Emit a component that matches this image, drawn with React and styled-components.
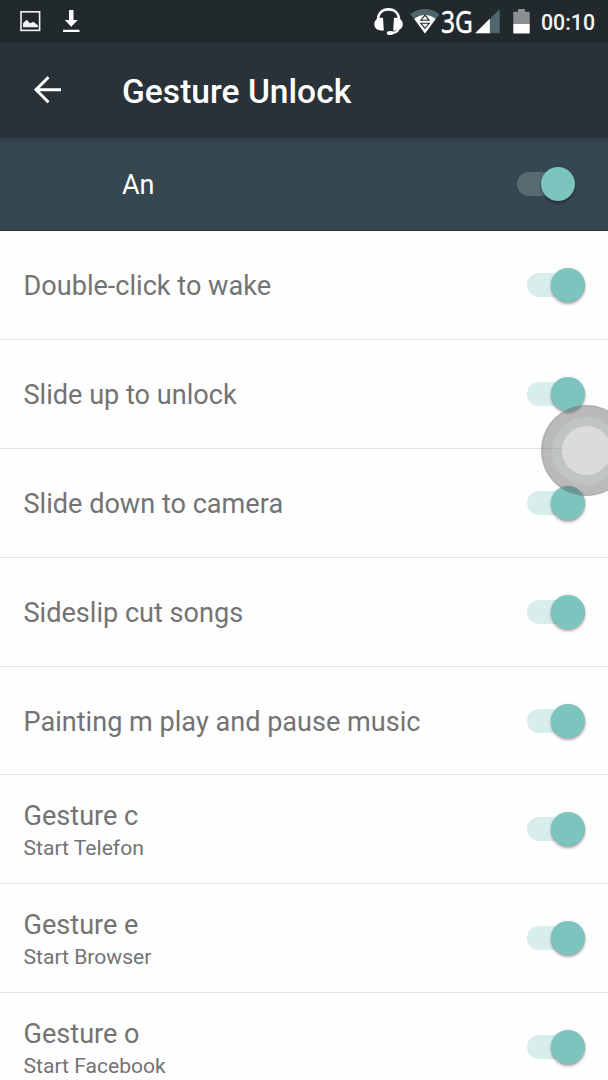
import React, { useState } from "react";
import styled, { createGlobalStyle } from "styled-components";

const GlobalStyle = createGlobalStyle`
  body {
    margin: 0;
    background: #fefefe;
    font-family: Roboto, "Noto Sans", sans-serif;
    overflow: hidden;
  }
`;

const Screen = styled.div`
  position: relative;
  width: 608px;
  height: 1080px;
  overflow: hidden;
  background: #fefefe;
`;

const StatusBar = styled.div`
  display: flex;
  align-items: center;
  justify-content: space-between;
  box-sizing: border-box;
  height: 42px;
  padding: 0 13px 0 19px;
  background: #22292d;
`;

const StatusGroup = styled.div`
  display: flex;
  align-items: center;
  height: 42px;
`;

const Icon = styled.svg`
  display: block;
  flex: none;
  margin-left: ${props => props.$gap || 0}px;
`;

const Network = styled.div`
  width: 32px;
  height: 42px;
  margin-left: 1px;
  color: white;
  font-family: "Noto Sans", sans-serif;
  font-size: 31px;
  line-height: 43px;
  white-space: nowrap;
  -webkit-text-stroke: 0.4px white;
`;

const Narrow = styled.span`
  display: inline-block;
  transform: scaleX(0.79);
  transform-origin: left;
`;

const Clock = styled.div`
  width: 54px;
  margin-left: 11px;
  padding-top: 3px;
  color: #f4f5f5;
  font-size: 21.3px;
  font-weight: 500;
  line-height: 42px;
  white-space: nowrap;
`;

const Header = styled.header`
  display: flex;
  align-items: center;
  height: 95px;
  padding-left: 34px;
  background: #283238;
`;

const Title = styled.h1`
  margin: 5px 0 0 60px;
  color: white;
  font-size: 33.6px;
  font-weight: 500;
  line-height: 40px;
  white-space: nowrap;
`;

const MasterRow = styled.div`
  display: flex;
  align-items: center;
  justify-content: space-between;
  box-sizing: border-box;
  height: 94px;
  padding: 1px 33px 0 122px;
  border-bottom: 1px solid #2b373d;
  background: linear-gradient(#2d3b42, #37474f 6px);
`;

const MasterLabel = styled.div`
  margin-top: 1px;
  color: white;
  font-size: 27px;
  line-height: 32px;
`;

const Row = styled.div`
  display: flex;
  align-items: center;
  justify-content: space-between;
  box-sizing: border-box;
  height: 108.9px;
  padding: 0 23px 0 23.5px;
  border-bottom: 1px solid #e2e2e2;
`;

const RowText = styled.div`
  padding-top: ${props => props.$double ? 6 : 3}px;
`;

const RowTitle = styled.div`
  color: #737373;
  font-size: 27.1px;
  line-height: 32px;
  white-space: nowrap;
`;

const RowSummary = styled.div`
  color: #737373;
  font-size: 21.1px;
  line-height: 32px;
  white-space: nowrap;
`;

const Track = styled.button`
  display: flex;
  align-items: center;
  justify-content: ${props => props.$on ? "flex-end" : "flex-start"};
  width: 58px;
  height: 24px;
  padding: 0;
  border: 0;
  border-radius: 12px;
  background: ${props => props.$dark ? "#566a6f" : "#d8eeeb"};
`;

const Thumb = styled.span`
  width: 34px;
  height: 34px;
  flex: none;
  border-radius: 50%;
  background: ${props => props.$on ? "#7cc5be" : "#f1f1f1"};
  box-shadow: 0 2px 3px rgba(0, 0, 0, 0.35), 0 0 2px rgba(0, 0, 0, 0.12);
`;

// floats above the list, half docked to the right edge
const AssistBall = styled.div`
  position: absolute;
  top: 405px;
  left: 540.5px;
  display: grid;
  place-items: center;
  width: 91px;
  height: 91px;
  border-radius: 50%;
  background: rgba(77, 77, 77, 0.38);
  box-shadow: inset 0 0 0 2px rgba(150, 150, 150, 0.2);
`;

const AssistRing = styled.div`
  display: grid;
  place-items: center;
  width: 68px;
  height: 68px;
  border-radius: 50%;
  background: rgba(205, 220, 222, 0.3);
`;

const AssistCore = styled.div`
  width: 49px;
  height: 49px;
  border-radius: 50%;
  background: rgba(235, 235, 232, 0.6);
`;

const gestures = [
  { title: "Double-click to wake" },
  { title: "Slide up to unlock" },
  { title: "Slide down to camera" },
  { title: "Sideslip cut songs" },
  { title: "Painting m play and pause music" },
  { title: "Gesture c", summary: "Start Telefon" },
  { title: "Gesture e", summary: "Start Browser" },
  { title: "Gesture o", summary: "Start Facebook" },
];

function Switch({ dark, label }) {
  const [on, setOn] = useState(true);
  return (
    <Track
      type="button"
      role="switch"
      aria-checked={on}
      aria-label={label}
      $on={on}
      $dark={dark}
      onClick={() => setOn(!on)}
    >
      <Thumb $on={on} />
    </Track>
  );
}

function StatusIcons() {
  return (
    <StatusBar>
      <StatusGroup>
        <Icon width="22" height="22" viewBox="0 0 22 22">
          <rect x="2" y="1.8" width="18.6" height="18.6" fill="none" stroke="#f2f2f2" strokeWidth="1.6" />
          <path d="M4 17.3V13.2L7.6 9.7L11 13.2L14.5 11.8L19 15.4V17.3Z" fill="#f2f2f2" />
        </Icon>
        <Icon $gap={21} width="18" height="24" viewBox="0 0 18 24">
          <path d="M7 1H11.5V11H15.8L9.2 17.7L2.7 11H7ZM1 20.7H17.5V23H1Z" fill="#fff" />
        </Icon>
      </StatusGroup>
      <StatusGroup>
        <Icon width="30" height="30" viewBox="0 0 30 30">
          <path d="M5 14C5 7 9.5 3.4 15.5 3.4S26 7 26 14" fill="none" stroke="#fff" strokeWidth="2.6" />
          <path d="M10 11.8L10.8 24.4C4.5 25 1.3 22 1.3 18.2C1.3 14.5 4 11.8 10 11.8ZM21 11.8L20.2 24.4C26.5 25 29.8 22 29.8 18.2C29.8 14.5 27 11.8 21 11.8Z" fill="#fff" />
          <path d="M25.5 22.5C25 26 22 27 18 27" fill="none" stroke="#fff" strokeWidth="2.2" />
          <ellipse cx="17.2" cy="26.9" rx="3.4" ry="2" fill="#fff" />
        </Icon>
        <Icon $gap={7} width="30" height="26" viewBox="0 0 30 26">
          <path d="M.3 6.3C9 -.8 21 -.8 29.5 6.3L15 25.5Z" fill="#50666d" />
          <path d="M4.3 11C10.5 5.6 19.5 5.6 25.6 11L15 25.5Z" fill="#fff" />
          <path d="M10.8 12.3L15 7.2L19.2 12.3ZM10.8 15.3L15 20.4L19.2 15.3Z" fill="#fff" stroke="#22292d" strokeWidth="1.1" />
        </Icon>
        <Network><Narrow>3G</Narrow></Network>
        <Icon $gap={2} width="25" height="25" viewBox="0 0 25 25">
          <path d="M.2 24.2L24.7 0V24.2Z" fill="#50666d" />
          <path d="M.2 24.2L14.8 9.7V24.2Z" fill="#fff" />
        </Icon>
        <Icon $gap={13} width="17" height="25" viewBox="0 0 17 25">
          <path d="M.3 2.7H5V0H12V2.7H16.7V15H.3Z" fill="#8c9090" />
          <path d="M.3 15H16.7V24.5H.3Z" fill="#fff" />
        </Icon>
        <Clock>00:10</Clock>
      </StatusGroup>
    </StatusBar>
  );
}

function App() {
  return (
    <>
      <GlobalStyle />
      <Screen>
        <StatusIcons />
        <Header>
          <Icon width="28" height="28" viewBox="0 0 28 28">
            <path d="M27 13.7H2.5M14.5 1.2L2 13.7L14.5 26.2" fill="none" stroke="#fff" strokeWidth="3" />
          </Icon>
          <Title>Gesture Unlock</Title>
        </Header>
        <MasterRow>
          <MasterLabel>An</MasterLabel>
          <Switch dark label="Gesture Unlock" />
        </MasterRow>
        {gestures.map(item => (
          <Row key={item.title}>
            <RowText $double={Boolean(item.summary)}>
              <RowTitle>{item.title}</RowTitle>
              {item.summary && <RowSummary>{item.summary}</RowSummary>}
            </RowText>
            <Switch label={item.title} />
          </Row>
        ))}
        <AssistBall>
          <AssistRing>
            <AssistCore />
          </AssistRing>
        </AssistBall>
      </Screen>
    </>
  );
}

export default App;
